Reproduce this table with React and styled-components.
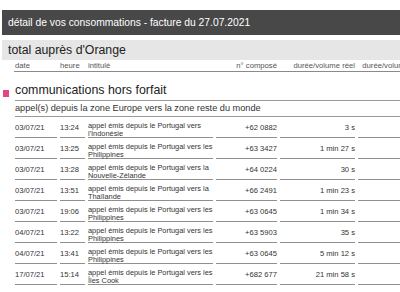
import React from "react";
import styled, { createGlobalStyle } from "styled-components";

const Global = createGlobalStyle`
  html, body { margin: 0; padding: 0; background: #fff; }
  body { font-family: "Liberation Sans", Arial, sans-serif; overflow: hidden; width: 400px; height: 292px; }
`;

const Page = styled.div`
  padding-top: 10px;
  padding-left: 2px;
  width: 560px;
`;

const TitleBar = styled.div`
  background: #484848;
  color: #fff;
  height: 25px;
  display: flex;
  align-items: center;
  padding-left: 6px;
  font-size: 10.3px;
`;

const TotalBar = styled.div`
  margin-top: 5px;
  background: #e6e6e6;
  color: #222;
  height: 20px;
  display: flex;
  align-items: center;
  padding-left: 6px;
  font-size: 12.3px;
`;

const COLS = "42px 25px 125px 61px 75px 80px";

const HeadRow = styled.div`
  margin-left: 12px;
  display: grid;
  grid-template-columns: ${COLS};
  column-gap: 3px;
  padding-left: 1px;
  height: 11px;
  align-items: end;
  border-bottom: 1px solid #8a8a8a;
  font-size: 7.7px;
  color: #555;
  line-height: 10px;
`;

const HeadCell = styled.div`
  text-align: ${(p) => (p.$right ? "right" : "left")};
  white-space: nowrap;
`;

const Section = styled.div`
  margin-top: 9px;
  display: flex;
  align-items: flex-end;
`;

const Square = styled.span`
  width: 6px;
  height: 7px;
  background: #e4477f;
  margin: 0 6px 4px 1px;
  flex: none;
`;

const SectionTitle = styled.div`
  flex: 1;
  font-size: 12.4px;
  color: #222;
  line-height: 19px;
  border-bottom: 1px solid #999;
`;

const Body = styled.div`
  margin-left: 13px;
`;

const SubTitle = styled.div`
  font-size: 9.2px;
  color: #333;
  line-height: 15px;
  border-bottom: 1px solid #999;
`;

const Row = styled.div`
  display: grid;
  grid-template-columns: ${COLS};
  column-gap: 3px;
`;

const Cell = styled.div`
  border-bottom: 1px solid #8f8f8f;
  font-size: 7.6px;
  line-height: 8px;
  color: #333;
  display: flex;
  align-items: center;
  justify-content: ${(p) => (p.$right ? "flex-end" : "flex-start")};
  padding-top: 1px;
  box-sizing: border-box;
  height: 21px;
  white-space: nowrap;
`;

const Label = styled.div`
  align-self: flex-start;
  padding-top: 4px;
  font-size: 7.4px;
`;

const rows = [
  ["03/07/21", "13:24", "appel émis depuis le Portugal vers", "l'Indonésie", "+62 0882", "3 s"],
  ["03/07/21", "13:25", "appel émis depuis le Portugal vers les", "Philippines", "+63 3427", "1 min 27 s"],
  ["03/07/21", "13:28", "appel émis depuis le Portugal vers la", "Nouvelle-Zélande", "+64 0224", "30 s"],
  ["03/07/21", "13:51", "appel émis depuis le Portugal vers la", "Thaïlande", "+66 2491", "1 min 23 s"],
  ["03/07/21", "19:06", "appel émis depuis le Portugal vers les", "Philippines", "+63 0645", "1 min 34 s"],
  ["04/07/21", "13:22", "appel émis depuis le Portugal vers les", "Philippines", "+63 5903", "35 s"],
  ["04/07/21", "13:41", "appel émis depuis le Portugal vers les", "Philippines", "+63 0645", "5 min 12 s"],
  ["17/07/21", "15:14", "appel émis depuis le Portugal vers les", "Îles Cook", "+682 677", "21 min 58 s"],
];

export default function App() {
  return (
    <>
      <Global />
      <Page>
        <TitleBar>détail de vos consommations - facture du 27.07.2021</TitleBar>
        <TotalBar>total auprès d'Orange</TotalBar>
        <HeadRow>
          <HeadCell>date</HeadCell>
          <HeadCell>heure</HeadCell>
          <HeadCell>intitulé</HeadCell>
          <HeadCell $right>n° composé</HeadCell>
          <HeadCell $right>durée/volume réel</HeadCell>
          <HeadCell>&nbsp;&nbsp;durée/volume facturé</HeadCell>
        </HeadRow>
        <Section>
          <Square />
          <SectionTitle>communications hors forfait</SectionTitle>
        </Section>
        <Body>
          <SubTitle>appel(s) depuis la zone Europe vers la zone reste du monde</SubTitle>
          {rows.map((r, i) => (
            <Row key={i}>
              <Cell>{r[0]}</Cell>
              <Cell>{r[1]}</Cell>
              <Cell>
                <Label>
                  {r[2]}
                  <br />
                  {r[3]}
                </Label>
              </Cell>
              <Cell $right>{r[4]}</Cell>
              <Cell $right>{r[5]}</Cell>
              <Cell $right></Cell>
            </Row>
          ))}
        </Body>
      </Page>
    </>
  );
}
